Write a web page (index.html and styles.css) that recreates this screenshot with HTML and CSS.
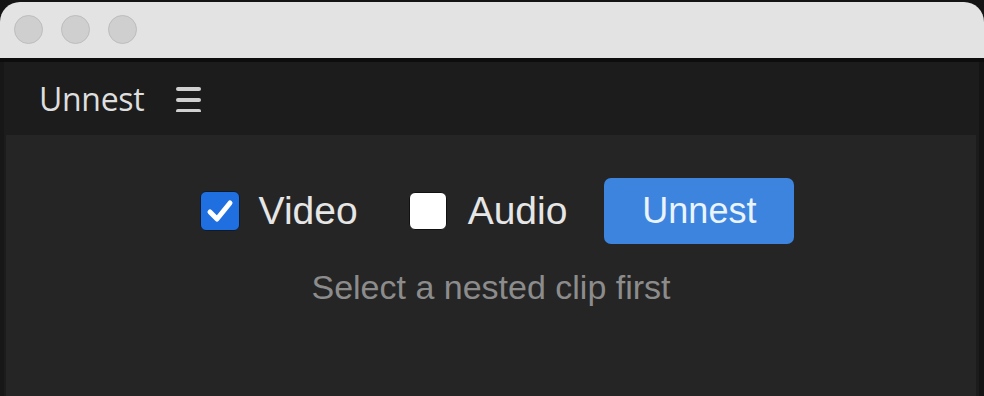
FILE: index.html
```html
<!DOCTYPE html>
<html>
<head>
  <title>Unnest</title>
  <link rel="stylesheet" href="styles.css">
</head>
<body>
  <div class="window">
    <div class="titlebar">
      <span class="light"></span>
      <span class="light"></span>
      <span class="light"></span>
    </div>
    <div class="panel">
      <div class="panel-header">
        <span class="panel-title">Unnest</span>
        <svg class="menu" width="27" height="30" viewBox="0 0 27 30">
          <rect x="1" y="5" width="25" height="4" rx="2" fill="#d0d0d0"/>
          <rect x="1" y="16" width="25" height="4" rx="2" fill="#d0d0d0"/>
          <rect x="1" y="27" width="25" height="4" rx="2" fill="#d0d0d0"/>
        </svg>
      </div>
      <div class="content">
        <div class="controls">
          <label class="option">
            <span class="box checked">
              <svg width="32" height="32" viewBox="0 0 32 32">
                <path d="M6 17 L13 24 L26 8" fill="none" stroke="#ffffff" stroke-width="5" stroke-linecap="round" stroke-linejoin="round"/>
              </svg>
            </span>
            <span class="option-label">Video</span>
          </label>
          <label class="option">
            <span class="box"></span>
            <span class="option-label">Audio</span>
          </label>
          <button class="unnest-btn">Unnest</button>
        </div>
        <div class="hint">Select a nested clip first</div>
      </div>
    </div>
  </div>
</body>
</html>
```

FILE: styles.css
```css
html, body {
  margin: 0;
  padding: 0;
  height: 100%;
  background: #141414;
}

.window {
  display: flex;
  flex-direction: column;
  height: 100%;
}

.titlebar {
  height: 60px;
  margin-top: 2px;
  padding-left: 14px;
  padding-top: 1px;
  box-sizing: border-box;
  background: #e3e3e3;
  border-radius: 20px 20px 0 0;
  border-bottom: 4px solid #0d0d0d;
  display: flex;
  align-items: center;
  gap: 18px;
}

.light {
  width: 27px;
  height: 27px;
  border-radius: 50%;
  background: #cfcfcf;
  border: 1px solid #bdbdbd;
  margin-top: -2px;
}

.panel {
  flex: 1;
  display: flex;
  flex-direction: column;
  background: #1c1c1c;
  margin-right: 5px;
  border-left: 4px solid #171717;
}

.panel-header {
  height: 73px;
  display: flex;
  align-items: center;
  padding-left: 35px;
  gap: 31px;
}

.panel-title {
  font-family: "Open Sans", "Noto Sans", sans-serif;
  font-size: 32px;
  color: #dedede;
  letter-spacing: -0.3px;
}

.menu {
  display: block;
  margin-top: -4px;
}

.content {
  flex: 1;
  background: #252525;
  margin-left: 2px;
  margin-right: 3px;
  display: flex;
  flex-direction: column;
  align-items: center;
  padding-top: 43px;
  font-family: "Liberation Sans", Arial, sans-serif;
}

.controls {
  display: flex;
  align-items: center;
  margin-left: 12px;
}

.option {
  display: flex;
  align-items: center;
  gap: 19px;
  margin-right: 51px;
}

.option + .option {
  gap: 21px;
  margin-right: 37px;
}

.box {
  width: 40px;
  height: 40px;
  border-radius: 6px;
  background: #ffffff;
  border: 1px solid #111;
  box-sizing: border-box;
  display: flex;
  align-items: center;
  justify-content: center;
}

.option + .option .box {
  width: 38px;
  height: 38px;
}

.box.checked {
  background: #1f6fe0;
  border-color: #0f1a2a;
}

.option-label {
  font-size: 39px;
  color: #e6e6e6;
}

.unnest-btn {
  width: 190px;
  height: 66px;
  border: none;
  border-radius: 7px;
  background: #3d84de;
  color: #eaf4ff;
  font-family: "Liberation Sans", Arial, sans-serif;
  font-size: 36px;
  padding: 0;
}

.hint {
  margin-top: 24px;
  font-size: 34px;
  color: #8c8c8c;
}
```
